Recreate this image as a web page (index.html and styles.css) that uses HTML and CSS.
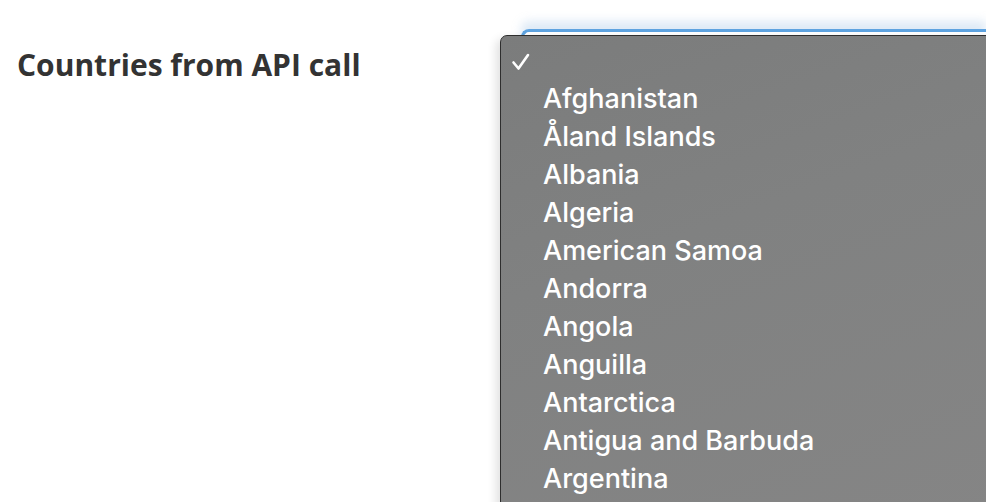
FILE: index.html
```html
<!DOCTYPE html>
<html>
<head>
<meta charset="utf-8">
<link rel="stylesheet" href="styles.css">
</head>
<body>
<div class="page">
  <h2 class="label">Countries from API call</h2>
  <div class="field">
    <div class="select-box"></div>
    <div class="menu">
      <div class="item checked"><svg class="check" width="20" height="20" viewBox="0 0 20 20"><path d="M2.5 10.5 L7.5 16.5 L17 3" fill="none" stroke="#fff" stroke-width="2.6" stroke-linecap="round" stroke-linejoin="round"/></svg></div>
      <div class="item">Afghanistan</div>
      <div class="item">Åland Islands</div>
      <div class="item">Albania</div>
      <div class="item">Algeria</div>
      <div class="item">American Samoa</div>
      <div class="item">Andorra</div>
      <div class="item">Angola</div>
      <div class="item">Anguilla</div>
      <div class="item">Antarctica</div>
      <div class="item">Antigua and Barbuda</div>
      <div class="item">Argentina</div>
    </div>
  </div>
</div>
</body>
</html>
```
FILE: styles.css
```css
html, body {
  margin: 0;
  padding: 0;
  background: #ffffff;
  overflow: hidden;
}
.page {
  display: flex;
  height: 502px;
  width: 986px;
}
.label {
  margin: 0;
  padding: 47px 0 0 17px;
  width: 500px;
  flex: none;
  box-sizing: border-box;
  font-family: "Open Sans", sans-serif;
  font-weight: 700;
  font-size: 30px;
  line-height: 36px;
  color: #333333;
  white-space: nowrap;
}
.field {
  position: relative;
  flex: 1;
}
.select-box {
  margin: 29px 0 0 21px;
  height: 40px;
  border-top: 3px solid #5ea3e0;
  border-left: 3px solid #5ea3e0;
  border-radius: 8px 0 0 0;
  box-shadow: 0 -8px 10px rgba(160, 195, 230, 0.35);
}
.menu {
  position: absolute;
  left: 0;
  top: 35px;
  width: 520px;
  height: 480px;
  box-sizing: border-box;
  border: 1px solid #2e2e2e;
  border-radius: 7px 0 0 0;
  background: linear-gradient(160deg, #7b7c7c 0%, #808181 40%, #858585 100%);
  box-shadow: -4px 4px 10px rgba(0, 0, 0, 0.12);
  padding-top: 6px;
  font-family: "Inter", "Liberation Sans", sans-serif;
  font-size: 27px;
  font-weight: 500;
  color: #ffffff;
}
.item {
  height: 38px;
  line-height: 38px;
  padding-left: 42px;
  white-space: nowrap;
}
.item.checked {
  position: relative;
}
.check {
  position: absolute;
  left: 10px;
  top: 10px;
}
```
